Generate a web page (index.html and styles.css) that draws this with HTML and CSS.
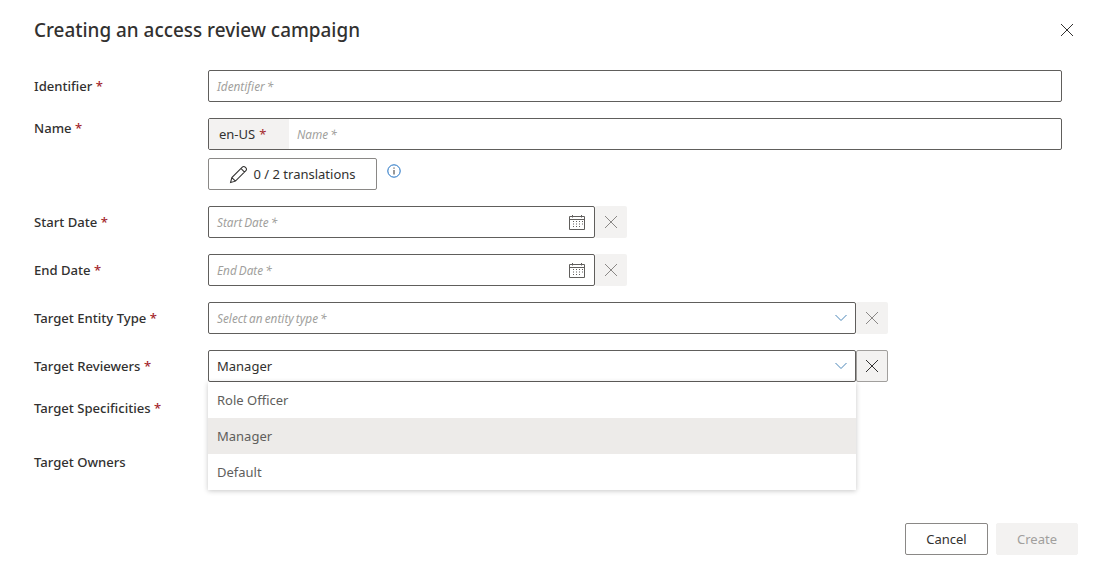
FILE: index.html
```html
<!DOCTYPE html>
<html lang="en">
<head>
  <meta charset="UTF-8">
  <title>Creating an access review campaign</title>
  <link rel="stylesheet" href="styles.css">
</head>
<body>
  <div class="dialog">
    <header class="dialog-head">
      <h1>Creating an access review campaign</h1>
      <button class="close" aria-label="Close">
        <svg width="14" height="14" viewBox="0 0 14 14"><path d="M1 1l12 12M13 1L1 13" stroke="#323130" fill="none"/></svg>
      </button>
    </header>

    <form class="form">
      <div class="row">
        <label class="label">Identifier <span class="req">*</span></label>
        <div class="control"><div class="input ph">Identifier *</div></div>
      </div>

      <div class="row row-top">
        <label class="label">Name <span class="req">*</span></label>
        <div class="control stack">
          <div class="input input-lang">
            <span class="lang">en-US <span class="req">*</span></span>
            <span class="ph lang-ph">Name *</span>
          </div>
          <div class="translations">
            <button type="button" class="btn btn-trans">
              <svg width="19" height="19" viewBox="0 0 18 18"><path d="M1.5 16.5l1.2-4.6L12.6 2a1.9 1.9 0 0 1 2.7 0l.7.7a1.9 1.9 0 0 1 0 2.7L6.100 15.300zM2.700 11.900l3.400 3.400M11.300 3.300l3.400 3.400" stroke="#323130" fill="none"/></svg>
              0 / 2 translations
            </button>
            <svg class="info" width="14" height="14" viewBox="0 0 14 14"><circle cx="7" cy="7" r="6.200" stroke="#1b6ec2" fill="none"/><path d="M7 6v4.500" stroke="#323130" fill="none"/><path d="M7 3.500v1.200" stroke="#323130" fill="none"/></svg>
          </div>
        </div>
      </div>

      <div class="row">
        <label class="label">Start Date <span class="req">*</span></label>
        <div class="control short">
          <div class="input ph grow">Start Date *
            <svg class="cal" width="16" height="16" viewBox="0 0 16 16"><use href="#cal"/></svg>
          </div>
          <button type="button" class="clear"><svg width="14" height="14" viewBox="0 0 14 14"><path d="M1 1l12 12M13 1L1 13" stroke="#8a8886" fill="none"/></svg></button>
        </div>
      </div>

      <div class="row">
        <label class="label">End Date <span class="req">*</span></label>
        <div class="control short">
          <div class="input ph grow">End Date *
            <svg class="cal" width="16" height="16" viewBox="0 0 16 16"><use href="#cal"/></svg>
          </div>
          <button type="button" class="clear"><svg width="14" height="14" viewBox="0 0 14 14"><path d="M1 1l12 12M13 1L1 13" stroke="#8a8886" fill="none"/></svg></button>
        </div>
      </div>

      <div class="row">
        <label class="label">Target Entity Type <span class="req">*</span></label>
        <div class="control medium">
          <div class="input ph grow">Select an entity type *
            <svg class="chev" width="12" height="8" viewBox="0 0 12 8"><path d="M.5 1l5.500 5.500L11.500 1" stroke="#4a86b8" fill="none"/></svg>
          </div>
          <button type="button" class="clear"><svg width="14" height="14" viewBox="0 0 14 14"><path d="M1 1l12 12M13 1L1 13" stroke="#8a8886" fill="none"/></svg></button>
        </div>
      </div>

      <div class="row">
        <label class="label">Target Reviewers <span class="req">*</span></label>
        <div class="control medium">
          <div class="select-wrap grow">
            <div class="input value">Manager
              <svg class="chev" width="12" height="8" viewBox="0 0 12 8"><path d="M.5 1l5.500 5.500L11.500 1" stroke="#4a86b8" fill="none"/></svg>
            </div>
            <ul class="menu">
              <li>Role Officer</li>
              <li class="selected">Manager</li>
              <li>Default</li>
            </ul>
          </div>
          <button type="button" class="clear clear-active"><svg width="14" height="14" viewBox="0 0 14 14"><path d="M1 1l12 12M13 1L1 13" stroke="#323130" fill="none"/></svg></button>
        </div>
      </div>

      <div class="row row-top row-spec">
        <label class="label">Target Specificities <span class="req">*</span></label>
      </div>

      <div class="row row-top">
        <label class="label">Target Owners</label>
      </div>
    </form>

    <footer class="dialog-foot">
      <button type="button" class="btn">Cancel</button>
      <button type="button" class="btn btn-off" disabled>Create</button>
    </footer>
  </div>

  <svg width="0" height="0" class="defs">
    <symbol id="cal" viewBox="0 0 16 16">
      <path d="M.5 2.500h15v13H.5zM.5 5.500h15M3.500 1v2.500M12.500 1v2.500" stroke="#605e5c" fill="none"/>
      <path d="M4 7.500h1M7 7.500h1M10 7.500h1M13 7.500h1M4 10h1M7 10h1M10 10h1M13 10h1M4 12.500h1M7 12.500h1M10 12.500h1" stroke="#605e5c" fill="none"/>
    </symbol>
  </svg>
</body>
</html>
```

FILE: styles.css
```css
* {
  box-sizing: border-box;
}

body {
  margin: 0;
  background: #fff;
  color: #323130;
  font-family: "Noto Sans", "Open Sans", sans-serif;
  font-size: 13px;
  overflow: hidden;
}

.dialog {
  width: 1098px;
  height: 575px;
  padding: 18px 20px 0 34px;
  display: flex;
  flex-direction: column;
}

.dialog-head {
  display: flex;
  justify-content: space-between;
  align-items: center;
  height: 24px;
  padding-right: 4px;
}

h1 {
  margin: 0;
  font-size: 18.9px;
  font-weight: 500;
  line-height: 24px;
}

.close {
  border: 0;
  background: none;
  padding: 0;
  width: 14px;
  height: 14px;
  display: flex;
}

.form {
  margin-top: 28px;
  display: flex;
  flex-direction: column;
  gap: 16px;
  width: 1028px;
}

.row {
  display: flex;
  align-items: center;
}

.row-top {
  align-items: flex-start;
}

.row-spec {
  height: 38px;
}

.label {
  width: 174px;
  flex: none;
  font-size: 13.1px;
  font-weight: 500;
  line-height: 20px;
}

.req {
  color: #a4262c;
}

.control {
  flex: 1;
  display: flex;
}

.stack {
  flex-direction: column;
  gap: 8px;
}

.short {
  width: 419px;
  flex: none;
}

.medium {
  width: 680px;
  flex: none;
}

.grow {
  flex: 1;
}

.input {
  position: relative;
  width: 100%;
  height: 32px;
  border: 1px solid #605e5c;
  border-radius: 2px;
  padding: 0 8px;
  display: flex;
  align-items: center;
  background: #fff;
}

.ph {
  color: #a19f9d;
  font-style: italic;
  font-size: 11.8px;
  word-spacing: -1px;
}

.value {
  color: #323130;
}

.input-lang {
  padding: 0;
  overflow: hidden;
}

.lang {
  width: 80px;
  height: 100%;
  background: #f3f2f1;
  padding: 0 0 0 10px;
  display: flex;
  align-items: center;
  gap: 4px;
}

.lang-ph {
  margin-left: 8px;
}

.translations {
  display: flex;
  align-items: flex-start;
  gap: 10px;
}

.info {
  margin-top: 6px;
}

.btn {
  height: 32px;
  width: 83px;
  border: 1px solid #8a8886;
  border-radius: 2px;
  background: #fff;
  color: #323130;
  font: inherit;
  display: flex;
  align-items: center;
  justify-content: center;
}

.btn-trans {
  width: 169px;
  gap: 5px;
}

.btn-off {
  width: 82px;
  border-color: #f3f2f1;
  background: #f3f2f1;
  color: #a19f9d;
}

.clear {
  width: 32px;
  height: 32px;
  flex: none;
  border: 0;
  border-radius: 2px;
  background: #f3f2f1;
  padding: 0;
  display: flex;
  align-items: center;
  justify-content: center;
}

.clear-active {
  border: 1px solid #a19f9d;
}

.cal {
  position: absolute;
  right: 9px;
  top: 7px;
}

.chev {
  position: absolute;
  right: 8px;
  top: 11px;
}

.select-wrap {
  position: relative;
}

.menu {
  position: absolute;
  left: 0;
  right: 0;
  top: 32px;
  margin: 0;
  padding: 0;
  list-style: none;
  background: #fff;
  color: #605e5c;
  box-shadow: 0 1px 5px rgba(0, 0, 0, 0.22);
  z-index: 5;
}

.menu li {
  height: 36px;
  line-height: 36px;
  padding-left: 9px;
}

.menu .selected {
  background: #edebe9;
}

.dialog-foot {
  position: absolute;
  right: 20px;
  top: 523px;
  display: flex;
  gap: 8px;
}

.defs {
  position: absolute;
}
```
